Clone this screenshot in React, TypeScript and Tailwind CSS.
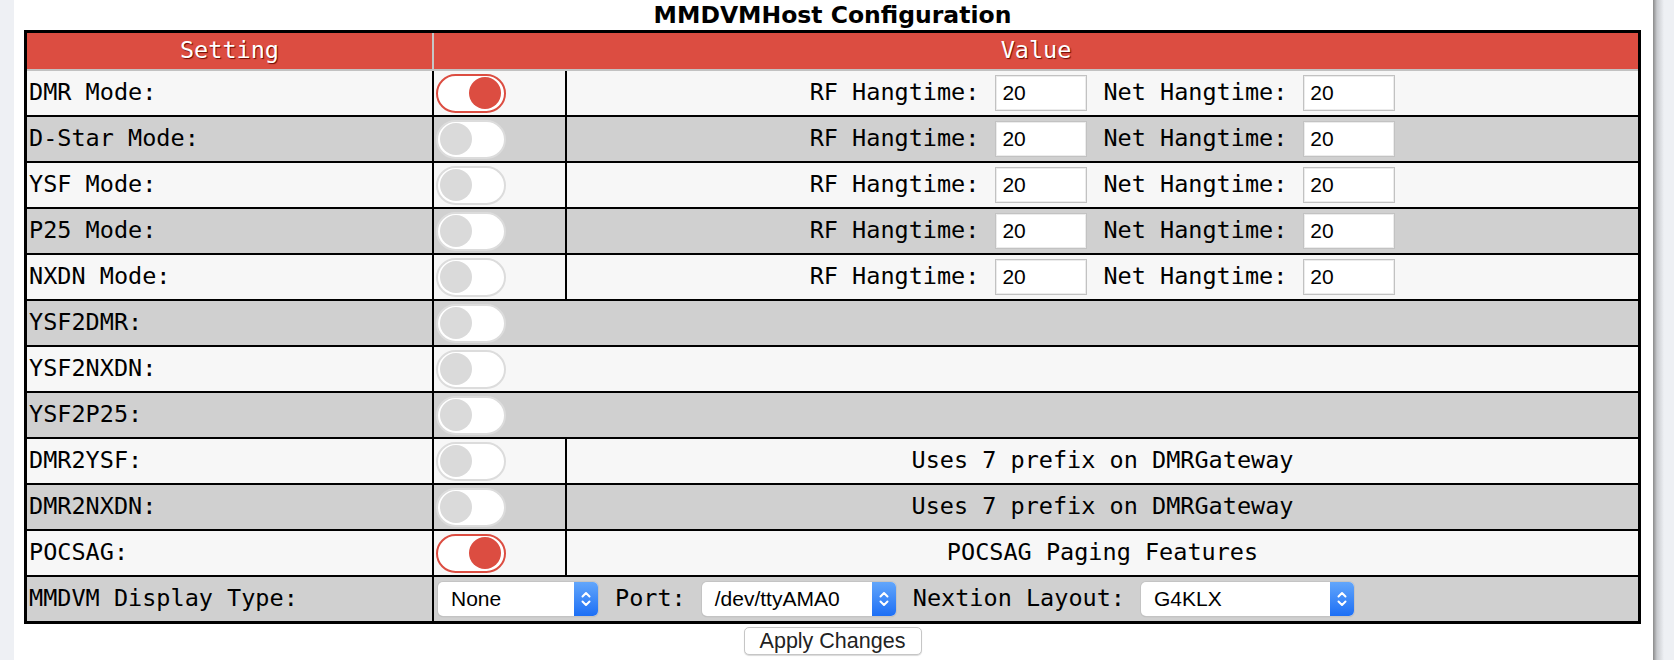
import React from "react";

const mono = "font-['DejaVu_Sans_Mono',monospace] text-[23.5px]";

function Toggle({ on }: { on: boolean }) {
  if (on) {
    return (
      <div className="ml-[2px] flex h-[39px] w-[70px] shrink-0 items-center justify-end rounded-full border-2 border-[#dc4d41] bg-white pr-[3px]">
        <div className="h-[32px] w-[32px] rounded-full bg-[#dc4d41]" />
      </div>
    );
  }
  return (
    <div className="ml-[2px] flex h-[39px] w-[70px] shrink-0 items-center justify-start rounded-full border-2 border-[#dcdcdc] bg-white pl-[2px]">
      <div className="h-[32px] w-[32px] rounded-full bg-[#dadada]" />
    </div>
  );
}

function NumInput({ value }: { value: string }) {
  return (
    <div className="flex h-[36px] w-[92px] shrink-0 items-center border border-[#c2c2c2] bg-white pl-[6px] font-['Liberation_Sans',Arial,sans-serif] text-[21px] text-black shadow-[inset_0_0_0_1px_#ececec]">
      {value}
    </div>
  );
}

function Select({ value, width }: { value: string; width: string }) {
  return (
    <div
      className={`flex h-[34px] shrink-0 items-stretch overflow-hidden rounded-[5px] bg-white shadow-[0_0_0_1px_#c4c4c4,0_1px_1px_rgba(0,0,0,0.2)] ${width}`}
    >
      <div className="flex flex-1 items-center pl-[13px] font-['Liberation_Sans',Arial,sans-serif] text-[21px] text-black">
        {value}
      </div>
      <div className="flex w-[24px] items-center justify-center bg-[linear-gradient(to_bottom,#62a6fb,#1d6ff5)]">
        <svg width="12" height="20" viewBox="0 0 12 20" fill="none">
          <path d="M2.5 7.5 L6 4 L9.5 7.5" stroke="white" strokeWidth="2" strokeLinecap="round" strokeLinejoin="round" />
          <path d="M2.5 12.5 L6 16 L9.5 12.5" stroke="white" strokeWidth="2" strokeLinecap="round" strokeLinejoin="round" />
        </svg>
      </div>
    </div>
  );
}

type RowKind = "hang" | "span" | "text";
interface RowDef {
  label: string;
  on: boolean;
  kind: RowKind;
  text?: string;
}

const rows: RowDef[] = [
  { label: "DMR Mode:", on: true, kind: "hang" },
  { label: "D-Star Mode:", on: false, kind: "hang" },
  { label: "YSF Mode:", on: false, kind: "hang" },
  { label: "P25 Mode:", on: false, kind: "hang" },
  { label: "NXDN Mode:", on: false, kind: "hang" },
  { label: "YSF2DMR:", on: false, kind: "span" },
  { label: "YSF2NXDN:", on: false, kind: "span" },
  { label: "YSF2P25:", on: false, kind: "span" },
  { label: "DMR2YSF:", on: false, kind: "text", text: "Uses 7 prefix on DMRGateway" },
  { label: "DMR2NXDN:", on: false, kind: "text", text: "Uses 7 prefix on DMRGateway" },
  { label: "POCSAG:", on: true, kind: "text", text: "POCSAG Paging Features" },
];

export default function App() {
  return (
    <div className="flex h-[660px] w-full overflow-hidden bg-[#eef0f4]">
      <div className="w-[14px] shrink-0" />
      <div className="w-[1639px] shrink-0 bg-white">
        <div className="flex h-[30px] w-[1617px] ml-[10px] items-center justify-center font-['DejaVu_Sans',sans-serif] text-[23.5px] font-bold leading-[30px] text-black">
          MMDVMHost Configuration
        </div>
        <div className={`ml-[10px] w-[1617px] border-[3px] border-black text-black ${mono}`}>
          {/* header */}
          <div className="flex h-[38px] border-b-2 border-[#c2c2c2] bg-[#dc4d41] text-white [text-shadow:1px_1px_1px_#6a0a00]">
            <div className="flex w-[405px] shrink-0 items-center justify-center">Setting</div>
            <div className="w-[2px] shrink-0 bg-[#c6c6c6]" />
            <div className="flex flex-1 items-center justify-center">Value</div>
          </div>
          {rows.map((r, i) => (
            <div
              key={r.label}
              className={`flex h-[46px] border-b-2 border-black ${i % 2 === 0 ? "bg-[#f7f7f7]" : "bg-[#d0d0d0]"}`}
            >
              <div className="flex w-[405px] shrink-0 items-center pl-[2px]">{r.label}</div>
              <div className="w-[2px] shrink-0 bg-black" />
              {r.kind === "span" ? (
                <div className="flex flex-1 items-center">
                  <Toggle on={r.on} />
                </div>
              ) : (
                <>
                  <div className="flex w-[131px] shrink-0 items-center">
                    <Toggle on={r.on} />
                  </div>
                  <div className="w-[2px] shrink-0 bg-black" />
                  <div className="flex flex-1 items-center justify-center">
                    {r.kind === "hang" ? (
                      <>
                        <span className="mr-[16px]">RF Hangtime:</span>
                        <NumInput value="20" />
                        <span className="ml-[16px] mr-[16px]">Net Hangtime:</span>
                        <NumInput value="20" />
                      </>
                    ) : (
                      <span>{r.text}</span>
                    )}
                  </div>
                </>
              )}
            </div>
          ))}
          <div className="flex h-[44px] bg-[#d0d0d0]">
            <div className="flex w-[405px] shrink-0 items-center pl-[2px]">MMDVM Display Type:</div>
            <div className="w-[2px] shrink-0 bg-black" />
            <div className="flex flex-1 items-center pl-[4px]">
              <Select value="None" width="w-[160px]" />
              <span className="ml-[17px] mr-[16px]">Port:</span>
              <Select value="/dev/ttyAMA0" width="w-[194px]" />
              <span className="ml-[17px] mr-[16px]">Nextion Layout:</span>
              <Select value="G4KLX" width="w-[213px]" />
            </div>
          </div>
        </div>
        <div className="ml-[10px] flex w-[1617px] justify-center pt-[3px]">
          <button className="flex h-[28px] w-[178px] items-center justify-center rounded-[5px] border border-[#c6c6c6] bg-white font-['Liberation_Sans',Arial,sans-serif] text-[21.5px] text-[#222] shadow-[0_1px_1px_rgba(0,0,0,0.15)]">
            Apply Changes
          </button>
        </div>
      </div>
      <div className="flex-1 bg-[linear-gradient(to_right,#8a8a8a,#c8cace_4px,#eef0f4_11px)]" />
    </div>
  );
}
